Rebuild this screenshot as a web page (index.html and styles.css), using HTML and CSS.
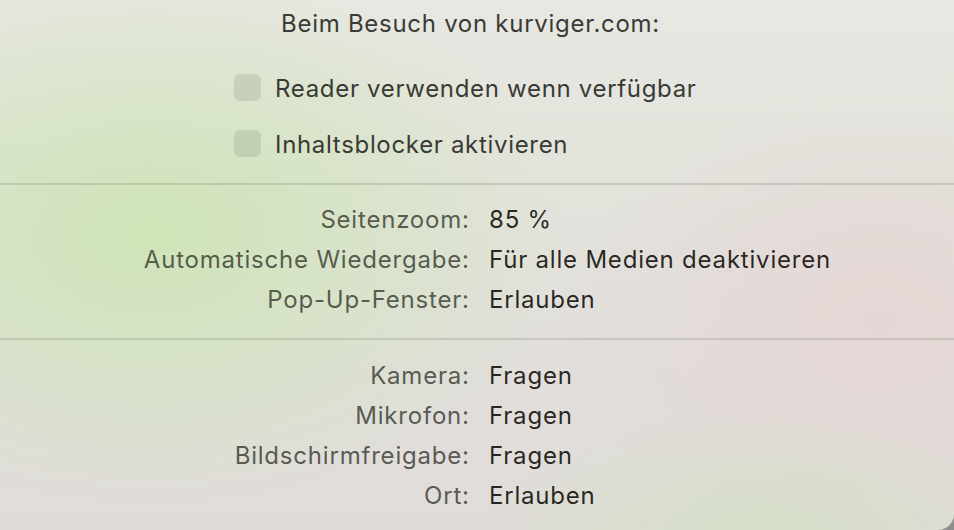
FILE: index.html
```html
<!DOCTYPE html>
<html lang="de">
<head>
<meta charset="utf-8">
<title>Einstellungen für kurviger.com</title>
<link rel="stylesheet" href="styles.css">
</head>
<body>
<div class="panel">
  <div class="title">Beim Besuch von kurviger.com:</div>
  <div class="checks">
    <label class="check"><span class="box"></span><span>Reader verwenden wenn verfügbar</span></label>
    <label class="check"><span class="box"></span><span>Inhaltsblocker aktivieren</span></label>
  </div>
  <div class="sep"></div>
  <div class="grid grid-a">
    <div class="lbl">Seitenzoom:</div><div class="val">85 %</div>
    <div class="lbl">Automatische Wiedergabe:</div><div class="val">Für alle Medien deaktivieren</div>
    <div class="lbl">Pop-Up-Fenster:</div><div class="val">Erlauben</div>
  </div>
  <div class="sep sep2"></div>
  <div class="grid grid-b">
    <div class="lbl">Kamera:</div><div class="val">Fragen</div>
    <div class="lbl">Mikrofon:</div><div class="val">Fragen</div>
    <div class="lbl">Bildschirmfreigabe:</div><div class="val">Fragen</div>
    <div class="lbl">Ort:</div><div class="val">Erlauben</div>
  </div>
</div>
</body>
</html>
```
FILE: styles.css
```css
html, body {
  margin: 0;
  padding: 0;
}
body {
  width: 954px;
  height: 530px;
  overflow: hidden;
  background: #8e8e8c;
  font-family: Inter, "Noto Sans", "Liberation Sans", sans-serif;
  font-size: 24px;
}
.panel {
  width: 954px;
  height: 530px;
  box-sizing: border-box;
  border-bottom-right-radius: 16px;
  overflow: hidden;
  background:
    radial-gradient(ellipse 420px 270px at 150px 235px, rgba(207, 228, 184, 1), rgba(210, 228, 190, 0.75) 40%, rgba(214, 226, 198, 0) 100%),
    radial-gradient(ellipse 280px 130px at 760px 540px, rgba(210, 224, 194, 0.8), rgba(210, 224, 194, 0) 100%),
    radial-gradient(ellipse 320px 230px at 880px 320px, rgba(229, 214, 212, 0.95), rgba(229, 214, 212, 0) 100%),
    linear-gradient(180deg, #e8e8e2 0%, #e3e3dc 35%, #e1dedb 70%, #e0dcd9 100%);
  padding-top: 4px;
}
.title {
  line-height: 40px;
  color: #3a3a36;
  padding-left: 281px;
  letter-spacing: 0.72px;
}
.checks {
  display: flex;
  flex-direction: column;
  gap: 16px;
  margin-top: 25px;
  padding-left: 234px;
}
.check {
  display: flex;
  align-items: center;
  gap: 14px;
  line-height: 40px;
  color: #393a34;
  letter-spacing: 0.68px;
}
.box {
  width: 27px;
  height: 27px;
  border-radius: 6px;
  background: rgba(80, 88, 70, 0.14);
  box-sizing: border-box;
  margin-top: -3px;
}
.sep {
  height: 2px;
  background: rgba(70, 75, 60, 0.17);
  margin-top: 18px;
}
.sep2 {
  margin-top: 18px;
}
.grid {
  display: grid;
  grid-template-columns: 469px auto;
  column-gap: 20px;
  line-height: 40px;
  letter-spacing: 0.8px;
}
.grid-a {
  margin-top: 15px;
}
.grid-b {
  margin-top: 16px;
}
.lbl {
  text-align: right;
  color: rgba(38, 40, 32, 0.74);
  margin-right: -0.8px;
}
.val {
  color: rgba(22, 20, 16, 0.92);
}
```
